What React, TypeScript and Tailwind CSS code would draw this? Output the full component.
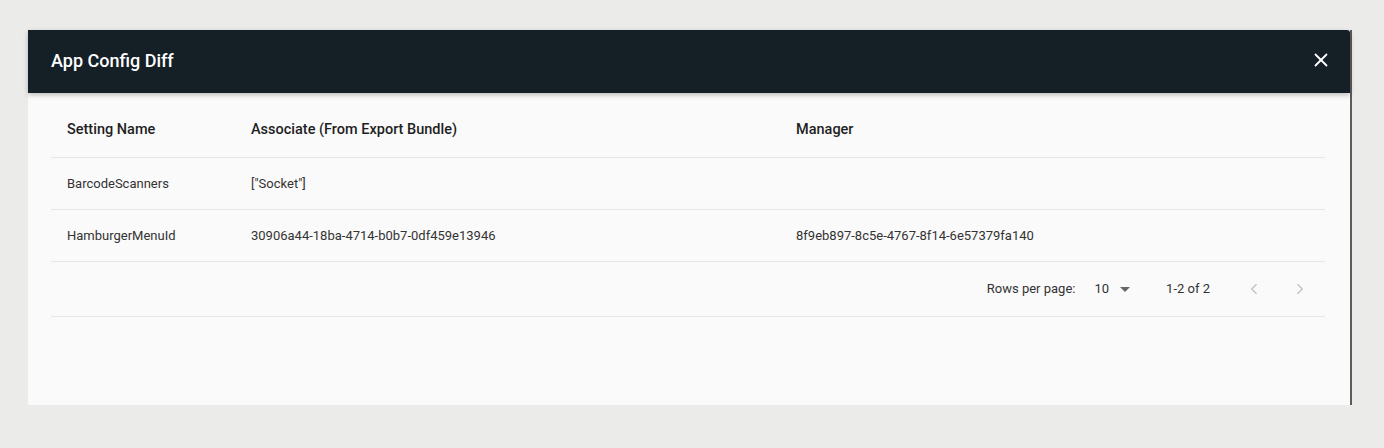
import { X, ChevronLeft, ChevronRight } from "lucide-react";

type Row = { name: string; associate: string; manager: string };

const rows: Row[] = [
  { name: "BarcodeScanners", associate: '["Socket"]', manager: "" },
  {
    name: "HamburgerMenuId",
    associate: "30906a44-18ba-4714-b0b7-0df459e13946",
    manager: "8f9eb897-8c5e-4767-8f14-6e57379fa140",
  },
];

const ConfigDiffTable = () => {
  return (
    <div className="ml-[23px] mr-[25px]">
      <div className="flex h-[65px] items-center border-b border-[#e6e6e6] pt-[9px] text-[14.5px] font-medium text-[#1f1f1f]">
        <div className="w-[200px] pl-4">Setting Name</div>
        <div className="w-[545px]">Associate (From Export Bundle)</div>
        <div>Manager</div>
      </div>
      {rows.map((row) => (
        <div
          key={row.name}
          className="flex h-[52px] items-center border-b border-[#e6e6e6] text-[13px] text-[#333]"
        >
          <div className="w-[200px] pl-4">{row.name}</div>
          <div className="w-[545px]">{row.associate}</div>
          <div>{row.manager}</div>
        </div>
      ))}
      <div className="flex h-[55px] items-center justify-end border-b border-[#e6e6e6] pr-[16px] text-[13px] text-[#333]">
        <span>Rows per page:</span>
        <div className="ml-[19px] flex items-center">
          <span>10</span>
          <svg width="10" height="5" viewBox="0 0 10 5" className="ml-[11px] mt-[1px]">
            <path d="M0 0 L10 0 L5 5 Z" fill="#666" />
          </svg>
        </div>
        <span className="ml-[36px]">1-2 of 2</span>
        <ChevronLeft className="ml-[35px]" size={18} strokeWidth={1.5} color="#bdbdbd" />
        <ChevronRight className="ml-[28px]" size={18} strokeWidth={1.5} color="#bdbdbd" />
      </div>
    </div>
  );
};

export default function App() {
  return (
    <div
      className="h-[448px] w-[1384px] bg-[#ebebe9] pt-[30px] pl-[28px]"
      style={{ fontFamily: "Roboto, 'Liberation Sans', sans-serif" }}
    >
      <div className="flex h-[375px] w-[1324px] flex-col border-r-2 border-[#5c5c5c] bg-[#fafafa]">
        <div className="relative z-10 flex h-[63px] items-center justify-between rounded-tr-[3px] bg-[#151f26] pb-[3px] pl-[23px] pr-[18px] shadow-[0_2px_5px_rgba(0,0,0,0.25)]">
          <h2 className="text-[18px] font-medium text-white">App Config Diff</h2>
          <X size={22} strokeWidth={2} color="#ffffff" />
        </div>
        <ConfigDiffTable />
      </div>
    </div>
  );
}
